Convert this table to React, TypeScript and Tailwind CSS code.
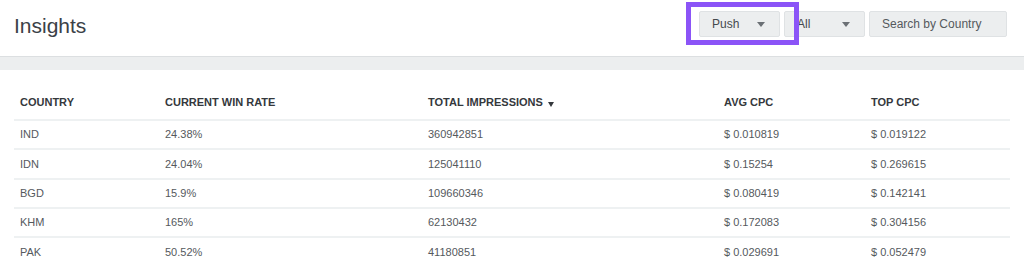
const rows = [
  { country: "IND", winRate: "24.38%", impressions: "360942851", avg: "$ 0.010819", top: "$ 0.019122" },
  { country: "IDN", winRate: "24.04%", impressions: "125041110", avg: "$ 0.15254", top: "$ 0.269615" },
  { country: "BGD", winRate: "15.9%", impressions: "109660346", avg: "$ 0.080419", top: "$ 0.142141" },
  { country: "KHM", winRate: "165%", impressions: "62130432", avg: "$ 0.172083", top: "$ 0.304156" },
  { country: "PAK", winRate: "50.52%", impressions: "41180851", avg: "$ 0.029691", top: "$ 0.052479" },
]

const Caret = () => (
  <svg width="8" height="5" viewBox="0 0 8 5" className="fill-[#6b7075]">
    <path d="M0 0h8L4 5z" />
  </svg>
)

const Select = ({ label, className }: { label: string; className?: string }) => (
  <div
    className={`flex h-[26px] w-[81px] items-center justify-between rounded-[2px] border border-[#dfe2e4] bg-[#eceeef] pr-[14px] pl-[12px] text-[12px] text-[#45494d] ${className ?? ""}`}
  >
    <span>{label}</span>
    <Caret />
  </div>
)

export default function App() {
  return (
    <div className="h-[265px] w-[1024px] overflow-hidden bg-white font-['Liberation_Sans',Arial,sans-serif]">
      <header className="flex h-[57px] items-center justify-between border-b border-[#dcdfe1] pr-[17px] pl-[14px]">
        <h1 className="pb-[4px] text-[21px] text-[#3b4147]">Insights</h1>
        <div className="relative flex items-center gap-[4px] pb-[8px]">
          <Select label="Push" />
          <Select label="All" className="w-[80px]" />
          <div className="flex h-[26px] w-[138px] items-center rounded-[2px] border border-[#dfe2e4] bg-[#eceeef] pl-[12px] text-[12px] text-[#55595d]">
            Search by Country
          </div>
          {/* highlight box drawn over the first select */}
          <div className="absolute top-[-9px] left-[-13px] h-[43px] w-[113px] border-[5px] border-[#8b54f7]" />
        </div>
      </header>
      <div className="h-[13px] bg-[#eceeef]" />
      <div className="px-[14px] pt-[18px]">
        <table className="w-[996px] table-fixed border-collapse text-left text-[11px]">
          <colgroup>
            <col className="w-[145px]" />
            <col className="w-[263px]" />
            <col className="w-[296px]" />
            <col className="w-[147px]" />
            <col className="w-[145px]" />
          </colgroup>
          <thead>
            <tr className="h-[32px] border-b-2 border-[#eef1f2] font-bold text-[#34383c]">
              <th className="px-[6px] pb-[2px]">COUNTRY</th>
              <th className="px-[6px] pb-[2px]">CURRENT WIN RATE</th>
              <th className="px-[6px] pb-[2px]">
                <span className="inline-flex items-center gap-[5px]">
                  TOTAL IMPRESSIONS
                  <svg width="6" height="5" viewBox="0 0 6 5" className="mt-[3px] fill-[#34383c]">
                    <path d="M0 0h6L3 5z" />
                  </svg>
                </span>
              </th>
              <th className="px-[6px] pb-[2px]">AVG CPC</th>
              <th className="px-[6px] pb-[2px]">TOP CPC</th>
            </tr>
          </thead>
          <tbody className="text-[#55595d]">
            {rows.map((r) => (
              <tr key={r.country} className="h-[29.3px] border-b-2 border-[#eef1f2]">
                <td className="px-[6px]">{r.country}</td>
                <td className="px-[6px]">{r.winRate}</td>
                <td className="px-[6px]">{r.impressions}</td>
                <td className="px-[6px]">{r.avg}</td>
                <td className="px-[6px]">{r.top}</td>
              </tr>
            ))}
          </tbody>
        </table>
      </div>
    </div>
  )
}
